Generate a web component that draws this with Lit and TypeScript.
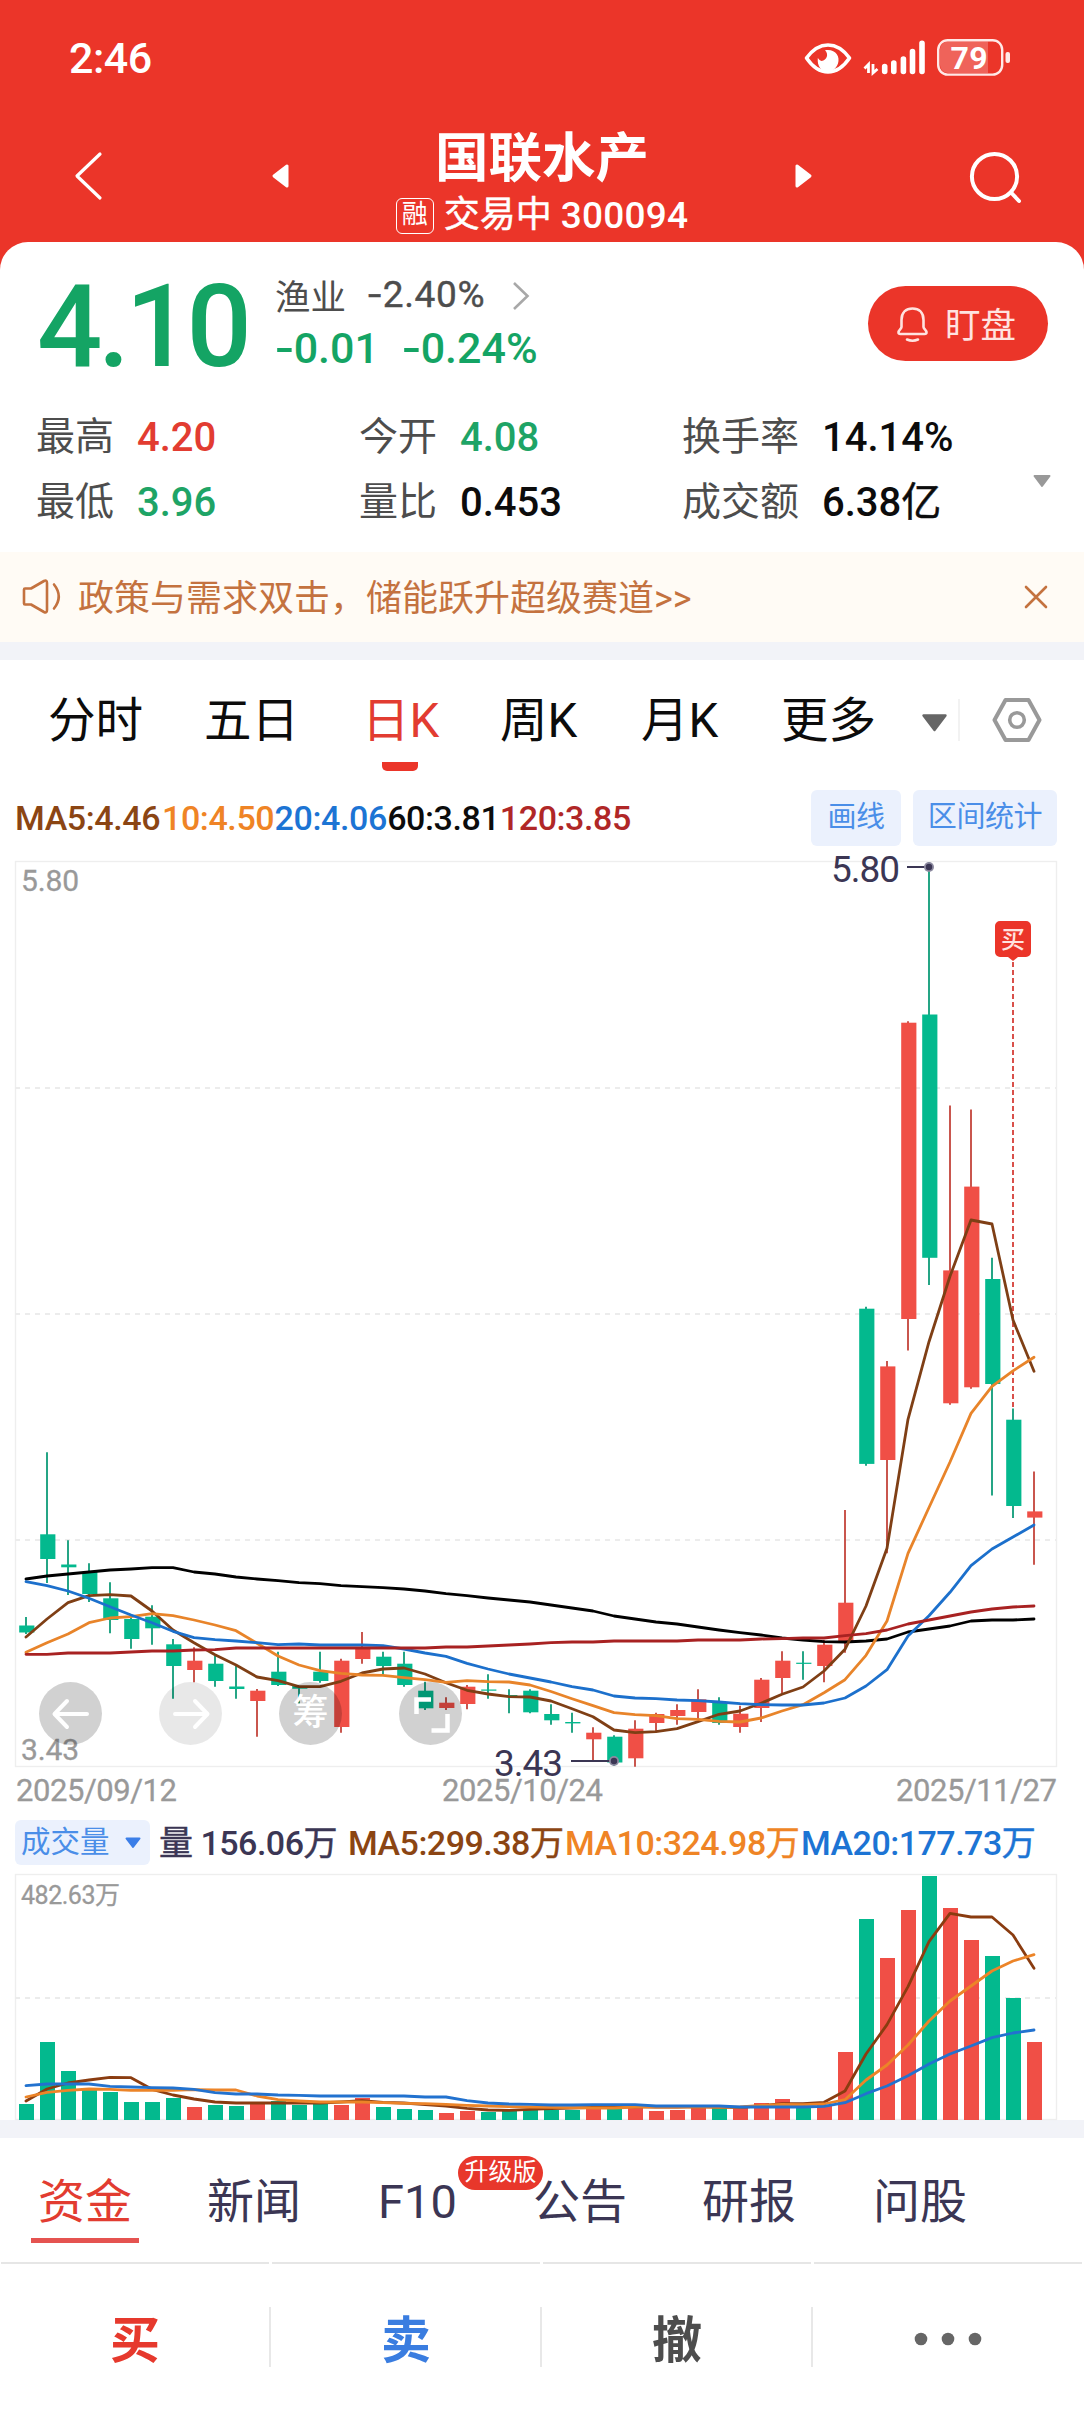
import { LitElement, html, svg, css } from "lit";
import { customElement } from "lit/decorators.js";

type Candle = [up: 0 | 1, high: number, low: number, top: number, bottom: number];

const STEP = 21;
const FIRST_X = 26;
const UP = "#f04f46";
const DOWN = "#03b98e";
const UP_WICK = "#c9564e";
const DOWN_WICK = "#25a585";
const cx = (i: number) => FIRST_X + i * STEP;

const CANDLES: Candle[] = [
  [0, 1617, 1634, 1625.5, 1632.5], [0, 1452.3, 1583, 1534.3, 1559], [0, 1540.3, 1595, 1564.5, 1567.3],
  [0, 1563.3, 1602, 1571.7, 1594], [0, 1582.3, 1633.3, 1598.3, 1620], [0, 1615, 1648.7, 1619, 1639],
  [0, 1605.3, 1644.7, 1616.7, 1628.3], [0, 1639, 1698.7, 1644.3, 1666], [1, 1647.3, 1682.3, 1660.7, 1670],
  [0, 1656, 1686.7, 1663.7, 1681], [0, 1666, 1698.7, 1686.5, 1689], [1, 1689, 1736.7, 1690.7, 1701],
  [0, 1651.7, 1686, 1671.7, 1685], [0, 1686, 1705, 1686, 1688.7], [0, 1651.7, 1682.7, 1671.7, 1681],
  [1, 1658.7, 1732.7, 1660.7, 1727], [1, 1632, 1663.7, 1648, 1659], [0, 1651.7, 1675, 1656.7, 1666],
  [0, 1651.7, 1686.7, 1663.7, 1685], [0, 1681.7, 1710, 1690.7, 1708.3], [1, 1697.3, 1710, 1702.7, 1708],
  [1, 1685, 1709.3, 1686.7, 1704], [0, 1674.3, 1698.7, 1689.5, 1690.7], [0, 1689.3, 1713.3, 1695, 1696.2],
  [0, 1689.3, 1713.3, 1690.7, 1712.3], [0, 1704.3, 1724.7, 1714, 1720.3], [0, 1712.7, 1732.7, 1722, 1723.4],
  [1, 1727.3, 1760, 1732.7, 1739.3], [0, 1735.3, 1766, 1736.7, 1762.5], [1, 1720.3, 1766.7, 1728.7, 1758.3],
  [1, 1712.7, 1732.3, 1714, 1723], [1, 1704.3, 1724.7, 1710, 1716], [1, 1689.3, 1719, 1699.3, 1712],
  [0, 1697.3, 1724.7, 1702.7, 1723], [1, 1705.7, 1732.7, 1713.7, 1727], [1, 1678, 1722, 1679.7, 1708],
  [1, 1651.3, 1693.3, 1660.7, 1678], [0, 1651.3, 1679.7, 1662.7, 1663.9], [1, 1640, 1682.3, 1644.7, 1666],
  [1, 1510, 1652.7, 1602.7, 1641.7], [0, 1306.8, 1465.8, 1308.7, 1463.9], [1, 1361, 1553.3, 1366.4, 1460],
  [1, 1021.3, 1350.4, 1022.7, 1319], [0, 862, 1285, 1014.5, 1257.8], [1, 1105.6, 1404.7, 1270.4, 1403.3],
  [1, 1109.5, 1388.7, 1186.6, 1387.3], [0, 1257.8, 1495.4, 1279, 1384], [0, 1408.6, 1518, 1419.7, 1506],
  [1, 1471.6, 1564.7, 1511.4, 1517.6],
];

const PRICE_LINES: { color: string; y: number[] }[] = [
  { color: "#000000", y: [1579, 1576, 1574, 1572, 1570, 1569, 1567.7, 1567.7, 1572, 1574, 1577, 1579, 1580.7, 1582.7, 1583.7, 1585.7, 1586.7, 1587.7, 1589, 1591, 1593.7, 1595.7, 1598, 1600, 1602, 1605, 1608, 1611, 1616, 1619, 1622, 1624, 1627, 1630, 1632.7, 1635, 1638, 1640, 1641.7, 1642, 1641, 1639, 1632, 1629, 1626, 1621, 1620, 1620, 1619] },
  { color: "#7f3f15", y: [1637, 1619, 1602.7, 1595.7, 1594.7, 1596, 1611, 1630, 1642.7, 1654.7, 1665, 1677, 1680.7, 1686.7, 1686.7, 1681.3, 1673, 1669, 1668, 1674, 1682.7, 1690.3, 1694, 1696.7, 1697, 1701, 1708.7, 1716.7, 1730, 1732.7, 1731.7, 1728.7, 1721.7, 1714.3, 1711, 1703.3, 1694.3, 1687, 1671, 1649.3, 1606, 1548.3, 1419.3, 1341.7, 1276.3, 1220, 1224, 1320, 1371.3] },
  { color: "#e8842a", y: [1652.3, 1642.7, 1634, 1622.7, 1618, 1616.7, 1613.7, 1615.7, 1620, 1625, 1630.7, 1643.3, 1656, 1665, 1670.7, 1673.3, 1675, 1675.3, 1677.7, 1679.7, 1682.3, 1680.7, 1681.7, 1682, 1685, 1691.5, 1698.7, 1705.7, 1712.7, 1714.7, 1715.7, 1718.7, 1719.3, 1721.3, 1722, 1718, 1711, 1704.7, 1692.7, 1679.7, 1655.3, 1621, 1553.3, 1507.5, 1462, 1413.4, 1386.3, 1370.8, 1357.2] },
  { color: "#1c70cc", y: [1581.7, 1585.7, 1591, 1598.3, 1606.7, 1615, 1622.7, 1631.3, 1637.7, 1639.7, 1641, 1642.7, 1644.7, 1644, 1645, 1645, 1645, 1645.7, 1649, 1653, 1656.3, 1663.3, 1669, 1674, 1678, 1682, 1686.7, 1690, 1696, 1698, 1698.7, 1700, 1700.7, 1702, 1703.7, 1704.7, 1705, 1705, 1703, 1698, 1686, 1669.7, 1636, 1615.7, 1592.3, 1565.7, 1549, 1537, 1525] },
  { color: "#a82222", y: [1654.3, 1654.3, 1653, 1653, 1653, 1652, 1651, 1651, 1650, 1649.7, 1648, 1648, 1648, 1648, 1648, 1648, 1648, 1648, 1648, 1648, 1647, 1647, 1646, 1645, 1644, 1642.7, 1642, 1642, 1641, 1641, 1641, 1641, 1640, 1640, 1640, 1639, 1638.7, 1638, 1638, 1635.7, 1633.7, 1630, 1624, 1620, 1616, 1612, 1609, 1607, 1606] },
];

const VOLUMES = [2104, 2042, 2071, 2089, 2092, 2102, 2102, 2098, 2107, 2105, 2106, 2103, 2101, 2105, 2103, 2105, 2098, 2107, 2109, 2110, 2113, 2111, 2112, 2110.7, 2110, 2110, 2110, 2109, 2109, 2108, 2111, 2110, 2108, 2107.5, 2108, 2103, 2099, 2106, 2105, 2052, 1919, 1958, 1910, 1876, 1908, 1940, 1956, 1998, 2042];

const volY = (v: number) => 1800 + v / 3;
const VOLUME_LINES: { color: string; y: number[] }[] = [
  { color: "#8a3c10", y: [903, 867, 849, 840, 832, 833, 868, 885, 897, 906, 909, 909, 909, 909, 909, 906, 902, 907, 909, 914, 918, 925, 930, 931, 928, 926, 924, 922, 922, 920, 921, 921, 920, 921, 923, 917, 911, 911, 907, 873, 762, 674, 560, 425, 340, 351, 351, 405, 505].map(volY) },
  { color: "#ec8428", y: [891, 877, 871, 867, 868, 871, 871, 871, 869, 870, 870, 888, 899, 903, 906, 906, 906, 908, 910, 911, 913, 916, 918, 920, 921, 922, 923, 924, 924, 921, 921, 921, 921, 922, 921, 916, 913, 914, 912, 899, 840, 795, 735, 663, 603, 558, 513, 483, 464].map(volY) },
  { color: "#2272cf", y: [857, 852, 852, 852, 859, 861, 863, 864, 868, 878, 882, 882, 885, 886, 888, 888, 888, 888, 888, 891, 891, 902, 909, 912, 913, 915, 915, 914, 914, 914, 918, 918, 918, 918, 921, 921, 921, 921, 919, 908, 881, 858, 827, 792, 762, 738, 713, 699, 690].map(volY) },
];

const trace = (ys: number[]) => ys.map((y, i) => `${cx(i)},${y}`).join(" ");

const line = (l: { color: string; y: number[] }) =>
  svg`<polyline points=${trace(l.y)} fill="none" stroke=${l.color} stroke-width="2.8" stroke-linejoin="round" stroke-linecap="round"/>`;

const FONT = css`
  :host {
    font-family: Roboto, "Noto Sans CJK SC", sans-serif;
  }
  svg {
    display: block;
    flex: none;
    overflow: visible;
  }
  * {
    box-sizing: border-box;
  }
`;

@customElement("price-chart")
export class PriceChart extends LitElement {
  static styles = [
    FONT,
    css`
      :host {
        display: block;
        position: relative;
        height: 962px;
      }
      .axis {
        fill: #999;
        stroke: #999;
        stroke-width: 0.3px;
      }
      .mark {
        fill: #3b3654;
        font-size: 37px;
      }
      .buy {
        fill: #ffe3e0;
        font-size: 24px;
        font-weight: 500;
      }
      .tools {
        position: absolute;
        left: 39px;
        top: 832px;
        display: flex;
        gap: 57px;
      }
      .tool {
        width: 63px;
        height: 63px;
        border-radius: 50%;
        background: rgba(0, 0, 0, 0.18);
        display: flex;
        align-items: center;
        justify-content: center;
        color: #fff;
        font-size: 36px;
        line-height: 63px;
        font-weight: 500;
      }
      .tool.off {
        background: rgba(0, 0, 0, 0.09);
      }
    `,
  ];

  render() {
    return html`
      <svg width="1084" height="962" viewBox="0 850 1084 962">
        <rect x="15.5" y="861.5" width="1041" height="905" fill="none" stroke="#eeeeee" stroke-width="1.4"/>
        ${[1088, 1314, 1540].map((y) => svg`<path d="M15 ${y}H1056" stroke="#ececec" stroke-width="1.8" stroke-dasharray="5 5"/>`)}
        ${CANDLES.map(([up, high, low, top, bottom], i) => svg`
          <path d="M${cx(i)} ${high}V${low}" stroke=${up ? UP_WICK : DOWN_WICK} stroke-width="2"/>
          <rect x=${cx(i) - 6.8} y=${top} width="15.2" height=${bottom - top} fill=${up ? UP : DOWN}/>`)}
        <path d="M1013 962V1408" stroke="#d9504a" stroke-width="2" stroke-dasharray="5 3"/>
        ${PRICE_LINES.map(line)}
        <path d="M907 867H929M571 1761H614" stroke="#3b3654" stroke-width="2"/>
        ${[[929, 867], [614, 1761]].map(([x, y]) => svg`
          <circle cx=${x} cy=${y} r="5" fill="#8d8aa0"/><circle cx=${x} cy=${y} r="3.2" fill="#3b3654"/>`)}
        <path d="M1000 921h26a5 5 0 0 1 5 5v26a5 5 0 0 1 -5 5h-8l-5 4l-5 -4h-8a5 5 0 0 1 -5 -5v-26a5 5 0 0 1 5 -5z" fill="#eb3529"/>
        <text class="buy" x="1001" y="948">买</text>
        <text class="axis" x="21" y="891" font-size="30" textLength="58">5.80</text>
        <text class="axis" x="21" y="1760" font-size="30" textLength="58">3.43</text>
        <text class="mark" x="831" y="882" textLength="69">5.80</text>
        <text class="mark" x="494" y="1776" textLength="69">3.43</text>
        <text class="axis" x="16" y="1801" font-size="31" textLength="161">2025/09/12</text>
        <text class="axis" x="442" y="1801" font-size="31" textLength="161">2025/10/24</text>
        <text class="axis" x="896" y="1801" font-size="31" textLength="161">2025/11/27</text>
      </svg>
      <div class="tools">
        <div class="tool">
          <svg width="40" height="36" viewBox="0 0 40 36" fill="none" stroke="#fff" stroke-width="4" stroke-linecap="round" stroke-linejoin="round"><path d="M36 18H4M16 5L3.500 18L16 31"/></svg>
        </div>
        <div class="tool off">
          <svg width="40" height="36" viewBox="0 0 40 36" fill="none" stroke="#fff" stroke-width="4" stroke-linecap="round" stroke-linejoin="round"><path d="M4 18H36M24 5L36.500 18L24 31"/></svg>
        </div>
        <div class="tool">筹</div>
        <div class="tool">
          <svg width="40" height="40" viewBox="0 0 40 40" fill="none" stroke="#fff" stroke-width="4.500"><path d="M5.500 20V5.500H20M20.500 36.500H36.500V20"/></svg>
        </div>
      </div>
    `;
  }
}

@customElement("volume-chart")
export class VolumeChart extends LitElement {
  static styles = [
    FONT,
    css`
      :host {
        display: block;
        height: 248px;
      }
      .axis {
        fill: #999;
        stroke: #999;
        stroke-width: 0.3px;
        font-size: 25px;
      }
    `,
  ];

  render() {
    return html`
      <svg width="1084" height="248" viewBox="0 1872 1084 248">
        <rect x="15.5" y="1874.5" width="1041" height="245" fill="none" stroke="#eeeeee" stroke-width="1.4"/>
        <path d="M15 1998H1056" stroke="#ececec" stroke-width="1.8" stroke-dasharray="5 5"/>
        ${VOLUMES.map((top, i) => svg`<rect x=${cx(i) - 7} y=${top} width="15" height=${2120 - top} fill=${CANDLES[i][0] ? UP : DOWN}/>`)}
        ${VOLUME_LINES.map(line)}
        <text class="axis" x="21" y="1904" textLength="99">482.63万</text>
      </svg>
    `;
  }
}

@customElement("app-root")
export class AppRoot extends LitElement {
  static styles = [
    FONT,
    css`
      :host {
        display: block;
        width: 1084px;
        height: 2412px;
        overflow: hidden;
        background: #fff;
        color: #0c0c0c;
        white-space: nowrap;
      }
      .han {
        font-weight: 400;
        -webkit-text-stroke: 0.5px currentColor;
      }
      .top {
        background: #eb3529;
        color: #fff;
      }
      .status {
        height: 115px;
        padding: 0 73px 0 69px;
        display: flex;
        align-items: center;
      }
      .time {
        flex: 1;
        font-size: 43px;
        font-weight: 500;
        letter-spacing: -0.5px;
      }
      .nav {
        height: 127px;
        padding-left: 73px;
        display: flex;
        align-items: flex-start;
      }
      .nav > svg {
        margin-top: 31px;
      }
      .prev {
        margin-left: 167px;
      }
      .find {
        margin-left: 155px;
      }
      .title {
        width: 504px;
        padding-top: 17px;
        display: flex;
        flex-direction: column;
        align-items: center;
      }
      .name {
        font-size: 53.500px;
        line-height: 54px;
        font-weight: 700;
      }
      .sub {
        margin-top: 9px;
        height: 42px;
        display: flex;
        align-items: center;
        font-size: 37px;
        line-height: 42px;
        font-weight: 500;
      }
      .rong {
        width: 38px;
        height: 36px;
        border: 1.500px solid #fff;
        border-radius: 6px;
        font-size: 26px;
        line-height: 31px;
        text-align: center;
        font-weight: 400;
        margin-right: 10px;
      }
      .state {
        font-size: 36px;
        margin: -3px 9px 0 0;
      }
      .code {
        letter-spacing: 0.200px;
      }
      .card {
        height: 310px;
        background: #fff;
        color: #0c0c0c;
        border-radius: 28px 28px 0 0;
        padding-top: 22px;
      }
      .quote {
        height: 141px;
        display: flex;
        padding-left: 37px;
        color: #14a464;
        font-weight: 500;
      }
      .price {
        width: 238px;
        font-size: 115px;
        line-height: 126px;
        letter-spacing: -4.400px;
      }
      .moves {
        flex: 1;
        padding-top: 4px;
      }
      .sector,
      .delta {
        display: flex;
        align-items: center;
        height: 53px;
      }
      .sector {
        color: #4d4d4d;
        font-size: 37px;
        font-weight: 400;
      }
      .sector b {
        font-size: 35.500px;
        font-weight: 400;
        margin-right: 22px;
      }
      .sector svg {
        margin-top: 3px;
      }
      .pct {
        width: 144px;
        letter-spacing: 0.600px;
        -webkit-text-stroke: 0.4px currentColor;
      }
      .delta {
        font-size: 43px;
      }
      .delta span {
        width: 127px;
      }
      .minus {
        display: inline-block;
        font-style: normal;
        transform: scaleX(1.300);
        transform-origin: left;
        margin-right: 4px;
      }
      .watch {
        margin: 22px 36px 0 0;
        width: 180px;
        height: 75px;
        border-radius: 38px;
        background: #eb3529;
        color: #ffe3e0;
        display: flex;
        align-items: center;
        padding-left: 28px;
        gap: 16px;
        font-size: 35.500px;
        font-weight: 400;
      }
      .watch span {
        margin-top: -3px;
      }
      .facts {
        display: flex;
        align-items: center;
        padding-left: 36px;
      }
      .facts > svg {
        margin-top: -4px;
      }
      .grid {
        display: grid;
        grid-template-columns: 323px 323px 351px;
        grid-auto-rows: 65px;
        align-items: center;
        font-size: 39px;
      }
      .fact {
        display: flex;
        gap: 23px;
        line-height: 65px;
        color: #4d4d4d;
      }
      .fact b {
        font-weight: 500;
        font-size: 40px;
        color: #0c0c0c;
      }
      .fact b.up {
        color: #e23c31;
      }
      .fact b.down {
        color: #1ea466;
      }
      .notice {
        height: 90px;
        background: #fffbf5;
        color: #c4723f;
        display: flex;
        align-items: center;
        padding: 0 36px 0 21px;
        font-size: 36px;
      }
      .notice span {
        flex: 1;
        padding-left: 15px;
        margin-top: -4px;
      }
      .gap {
        height: 18px;
        background: #f2f3f8;
      }
      .periods {
        height: 112px;
        display: flex;
        padding-left: 48px;
        font-size: 47.500px;
        line-height: 122px;
      }
      .period {
        flex: none;
        height: 112px;
      }
      .period.on {
        color: #e23c31;
      }
      .period.on::after {
        content: "";
        display: block;
        width: 36px;
        height: 9px;
        margin: -20px 0 0 20px;
        border-radius: 0 0 5px 5px;
        background: #eb3529;
      }
      .periods svg {
        margin-top: 36px;
      }
      .legend {
        height: 78px;
        display: flex;
        align-items: center;
        padding: 14px 27px 0 15px;
        font-size: 34px;
        font-weight: 500;
        letter-spacing: -0.400px;
      }
      .legend span {
        width: 112.600px;
      }
      .legend .first {
        width: 147px;
      }
      .legend .last {
        flex: 1;
      }
      .chip {
        background: #ebf1fd;
        color: #4a8ee8;
        border-radius: 6px;
        font-weight: 400;
      }
      .legend .chip {
        height: 56px;
        line-height: 54px;
        font-size: 29px;
        text-align: center;
        width: 90px;
        margin-left: 12px;
      }
      .legend .chip.wide {
        width: 144px;
      }
      .volbar {
        height: 60px;
        display: flex;
        padding: 8px 0 0 15px;
        font-size: 34px;
        line-height: 46px;
        font-weight: 500;
        letter-spacing: -0.500px;
      }
      .volbar .chip {
        width: 135px;
        height: 45px;
        padding: 0 9px 0 6px;
        display: flex;
        align-items: center;
        justify-content: space-between;
        font-size: 29.500px;
        line-height: 43px;
        letter-spacing: 0;
      }
      .volbar .now {
        color: #3b3654;
        width: 189px;
        margin-left: 9px;
      }
      .volbar .ma {
        flex: none;
        width: 217px;
      }
      .volbar .ma.wide {
        width: 236px;
      }
      .volbar .now {
        flex: none;
      }
      .brown {
        color: #8b4513;
      }
      .orange {
        color: #ef8425;
      }
      .blue {
        color: #1c74d4;
      }
      .crimson {
        color: #b02727;
      }
      .news {
        height: 124px;
        display: flex;
        font-size: 47px;
        line-height: 127px;
        color: #3b3654;
        padding-left: 31px;
      }
      .newsitem {
        flex: none;
        position: relative;
        padding-left: 7px;
      }
      .newsitem.on {
        color: #e23c31;
      }
      .newsitem.on::after {
        content: "";
        display: block;
        width: 108px;
        height: 5px;
        margin: -27px 0 0 -7px;
        background: #e55350;
      }
      .badge {
        position: absolute;
        left: 87px;
        top: 18px;
        z-index: 1;
        width: 85px;
        height: 34px;
        border-radius: 17px;
        background: #e8372b;
        color: #fff;
        font-size: 24px;
        line-height: 33px;
        text-align: center;
      }
      .trade {
        height: 150px;
        display: grid;
        grid-template-columns: repeat(4, 271px);
        font-size: 50px;
        font-weight: 700;
        line-height: 150px;
        text-align: center;
      }
      .act {
        display: grid;
        grid-template-columns: 1fr 2px;
        align-items: center;
        height: 150px;
        background: linear-gradient(#e6e6e6, #e6e6e6) 1px 0 / 268px 2px no-repeat;
      }
      .act span {
        padding: 4px 0 0 1px;
        height: 150px;
      }
      .act::after {
        content: "";
        width: 2px;
        height: 60px;
        background: #e8e8e8;
      }
      .act:last-child::after {
        background: none;
      }
      .act svg {
        margin: 4px auto 0;
      }
      .buy {
        color: #e6392d;
      }
      .sell {
        color: #3a7de0;
      }
      .cancel {
        color: #4d4d4d;
      }
    `,
  ];

  private neg(text: string) {
    return html`<i class="minus">-</i>${text}`;
  }

  private fact(label: string, value: string, tone = "", unit = "") {
    return html`<div class="fact">${label}<b class=${tone}>${value}${unit ? html`<span class="han">${unit}</span>` : ""}</b></div>`;
  }

  private wan(text: string) {
    return html`${text}<span class="han">万</span>`;
  }

  render() {
    return html`
      <div class="top">
        <div class="status">
          <div class="time">2:46</div>
          <svg width="207" height="40" viewBox="804 36 207 40">
            <path d="M806.500 56Q816 43 828 43Q840 43 849.500 56Q840 70 828 70Q816 70 806.500 56Z" fill="none" stroke="#fff" stroke-width="3.600" stroke-linejoin="round"/>
            <path d="M825 48.300C835 46.500 840.500 54 838 61.500C836 67.500 831 69.500 828 69.500C821 69.500 817 64 817.800 56C819 57.500 820 58.500 821.500 59C827 58.500 829 52 825 48.300Z" fill="#fff"/>
            <path d="M868.500 71V62.500L864.500 66.500M873 62V71L877.500 67" fill="none" stroke="#fff" stroke-width="2.800"/>
            <path d="M884.700 64.500V69.500M893.800 61V69.500M903.400 57V69.500M912.500 49.500V69.500M922 41.200V69.500" stroke="#fff" stroke-width="5.600" stroke-linecap="round"/>
            <path d="M948 39.500H988V71H948a8 8 0 0 1 -8 -8V47a8 8 0 0 1 8 -7.500Z" fill="#ef635a"/>
            <rect x="938.200" y="38.200" width="64" height="34.400" rx="9.500" fill="none" stroke="#ffe9e7" stroke-width="2.400"/>
            <rect x="1005.500" y="50" width="4.500" height="11" rx="2" fill="#ffe9e7"/>
            <text x="950.500" y="67" font-size="32" font-weight="700" fill="#fff" textLength="37">79</text>
          </svg>
        </div>
        <div class="nav">
          <svg width="30" height="60" viewBox="0 0 30 60" fill="none" stroke="#fff" stroke-width="3.200" stroke-linecap="round" stroke-linejoin="round"><path d="M27 8L4 30L27 52"/></svg>
          <svg class="prev" width="20" height="60" viewBox="0 0 20 60"><path d="M17 20V40L4 30Z" fill="#fff" stroke="#fff" stroke-width="3" stroke-linejoin="round"/></svg>
          <div class="title">
            <div class="name">国联水产</div>
            <div class="sub"><div class="rong">融</div><span class="state han">交易中</span><span class="code">300094</span></div>
          </div>
          <svg width="20" height="60" viewBox="0 0 20 60"><path d="M3 20V40L16 30Z" fill="#fff" stroke="#fff" stroke-width="3" stroke-linejoin="round"/></svg>
          <svg class="find" width="54" height="60" viewBox="0 0 54 60" fill="none" stroke="#fff" stroke-width="4" stroke-linecap="round"><circle cx="25.500" cy="30.500" r="22.600"/><path d="M42 46.500L50 55"/></svg>
        </div>
        <div class="card">
          <div class="quote">
            <div class="price">4.10</div>
            <div class="moves">
              <div class="sector">
                <b>渔业</b><span class="pct">${this.neg("2.40%")}</span>
                <svg width="18" height="32" viewBox="0 0 18 32" fill="none" stroke="#a8a8a8" stroke-width="2.600"><path d="M2 3L15.500 16L2 29"/></svg>
              </div>
              <div class="delta"><span>${this.neg("0.01")}</span><span>${this.neg("0.24%")}</span></div>
            </div>
            <div class="watch">
              <svg width="33" height="38" viewBox="0 0 33 38" fill="none" stroke="#ffe3e0" stroke-width="2.600" stroke-linejoin="round" stroke-linecap="round"><path d="M5.500 22V15C5.500 7.500 10 3.500 16.500 3.500S27.500 7.500 27.500 15V22C27.500 24 30.500 25 30.500 27.500Q30.500 29 28.500 29H4.500Q2.500 29 2.500 27.500C2.500 25 5.500 24 5.500 22ZM11 34.500Q16.500 37 22 34.500"/></svg>
              <span>盯盘</span>
            </div>
          </div>
          <div class="facts">
            <div class="grid">
              ${this.fact("最高", "4.20", "up")}${this.fact("今开", "4.08", "down")}${this.fact("换手率", "14.14%")}
              ${this.fact("最低", "3.96", "down")}${this.fact("量比", "0.453")}${this.fact("成交额", "6.38", "", "亿")}
            </div>
            <svg width="18" height="40" viewBox="0 0 18 40"><path d="M1.500 28H16.500L9 38Z" fill="#999" stroke="#999" stroke-width="2" stroke-linejoin="round"/></svg>
          </div>
        </div>
      </div>
      <div class="notice">
        <svg width="42" height="38" viewBox="0 0 42 38" fill="none" stroke="#c4723f" stroke-width="2.600" stroke-linejoin="round" stroke-linecap="round"><path d="M3 11.500Q3 10.500 4 10.500H10L23 3Q26 1.500 26 5V32Q26 35.500 23 34L10 26.500H4Q3 26.500 3 25.500ZM33 6.500Q42.500 18.500 33 30.500"/></svg>
        <span>政策与需求双击，储能跃升超级赛道&gt;&gt;</span>
        <svg width="24" height="24" viewBox="0 0 24 24" stroke="#c4723f" stroke-width="2.600" stroke-linecap="round"><path d="M2 2L22 22M22 2L2 22"/></svg>
      </div>
      <div class="gap"></div>
      <div class="periods">
        <div class="period" style="width:156px">分时</div>
        <div class="period" style="width:158px">五日</div>
        <div class="period on" style="width:138px">日K</div>
        <div class="period" style="width:141px">周K</div>
        <div class="period" style="width:140px">月K</div>
        <div class="period" style="width:140px">更多</div>
        <svg width="124" height="50" viewBox="921 696 124 50">
          <path d="M923.500 715.500H945.500L934.500 730Z" fill="#666" stroke="#666" stroke-width="2.400" stroke-linejoin="round"/>
          <path d="M959 699V741" stroke="#eeeeee" stroke-width="1.500"/>
          <path d="M1005.500 700H1028.500L1039.500 720L1028.500 740H1005.500L994.500 720Z" fill="none" stroke="#999" stroke-width="4" stroke-linejoin="round"/>
          <circle cx="1017" cy="720" r="7.300" fill="none" stroke="#999" stroke-width="3.600"/>
        </svg>
      </div>
      <div class="legend">
        <span class="first brown">MA5:4.46</span><span class="orange">10:4.50</span><span class="blue">20:4.06</span><span>60:3.81</span><span class="last crimson">120:3.85</span>
        <div class="chip">画线</div>
        <div class="chip wide">区间统计</div>
      </div>
      <price-chart></price-chart>
      <div class="volbar">
        <div class="chip">
          成交量
          <svg width="16" height="12" viewBox="0 0 16 12"><path d="M1.500 1.500H14.500L8 10Z" fill="#3b7ee8" stroke="#3b7ee8" stroke-width="2" stroke-linejoin="round"/></svg>
        </div>
        <div class="now"><span class="han">量</span> ${this.wan("156.06")}</div>
        <div class="ma brown">${this.wan("MA5:299.38")}</div><div class="ma wide orange">${this.wan("MA10:324.98")}</div><div class="ma wide blue">${this.wan("MA20:177.73")}</div>
      </div>
      <volume-chart></volume-chart>
      <div class="gap"></div>
      <div class="news">
        <div class="newsitem on" style="width:169px">资金</div>
        <div class="newsitem" style="width:171px">新闻</div>
        <div class="newsitem" style="width:155px">F10<div class="badge">升级版</div></div>
        <div class="newsitem" style="width:169px">公告</div>
        <div class="newsitem" style="width:171px">研报</div>
        <div class="newsitem">问股</div>
      </div>
      <div class="trade">
        <div class="act buy"><span>买</span></div>
        <div class="act sell"><span>卖</span></div>
        <div class="act cancel"><span>撤</span></div>
        <div class="act">
          <svg width="68" height="14" viewBox="0 0 68 14" fill="#666"><circle cx="7" cy="7" r="6.300"/><circle cx="34" cy="7" r="6.300"/><circle cx="61" cy="7" r="6.300"/></svg>
        </div>
      </div>
    `;
  }
}
